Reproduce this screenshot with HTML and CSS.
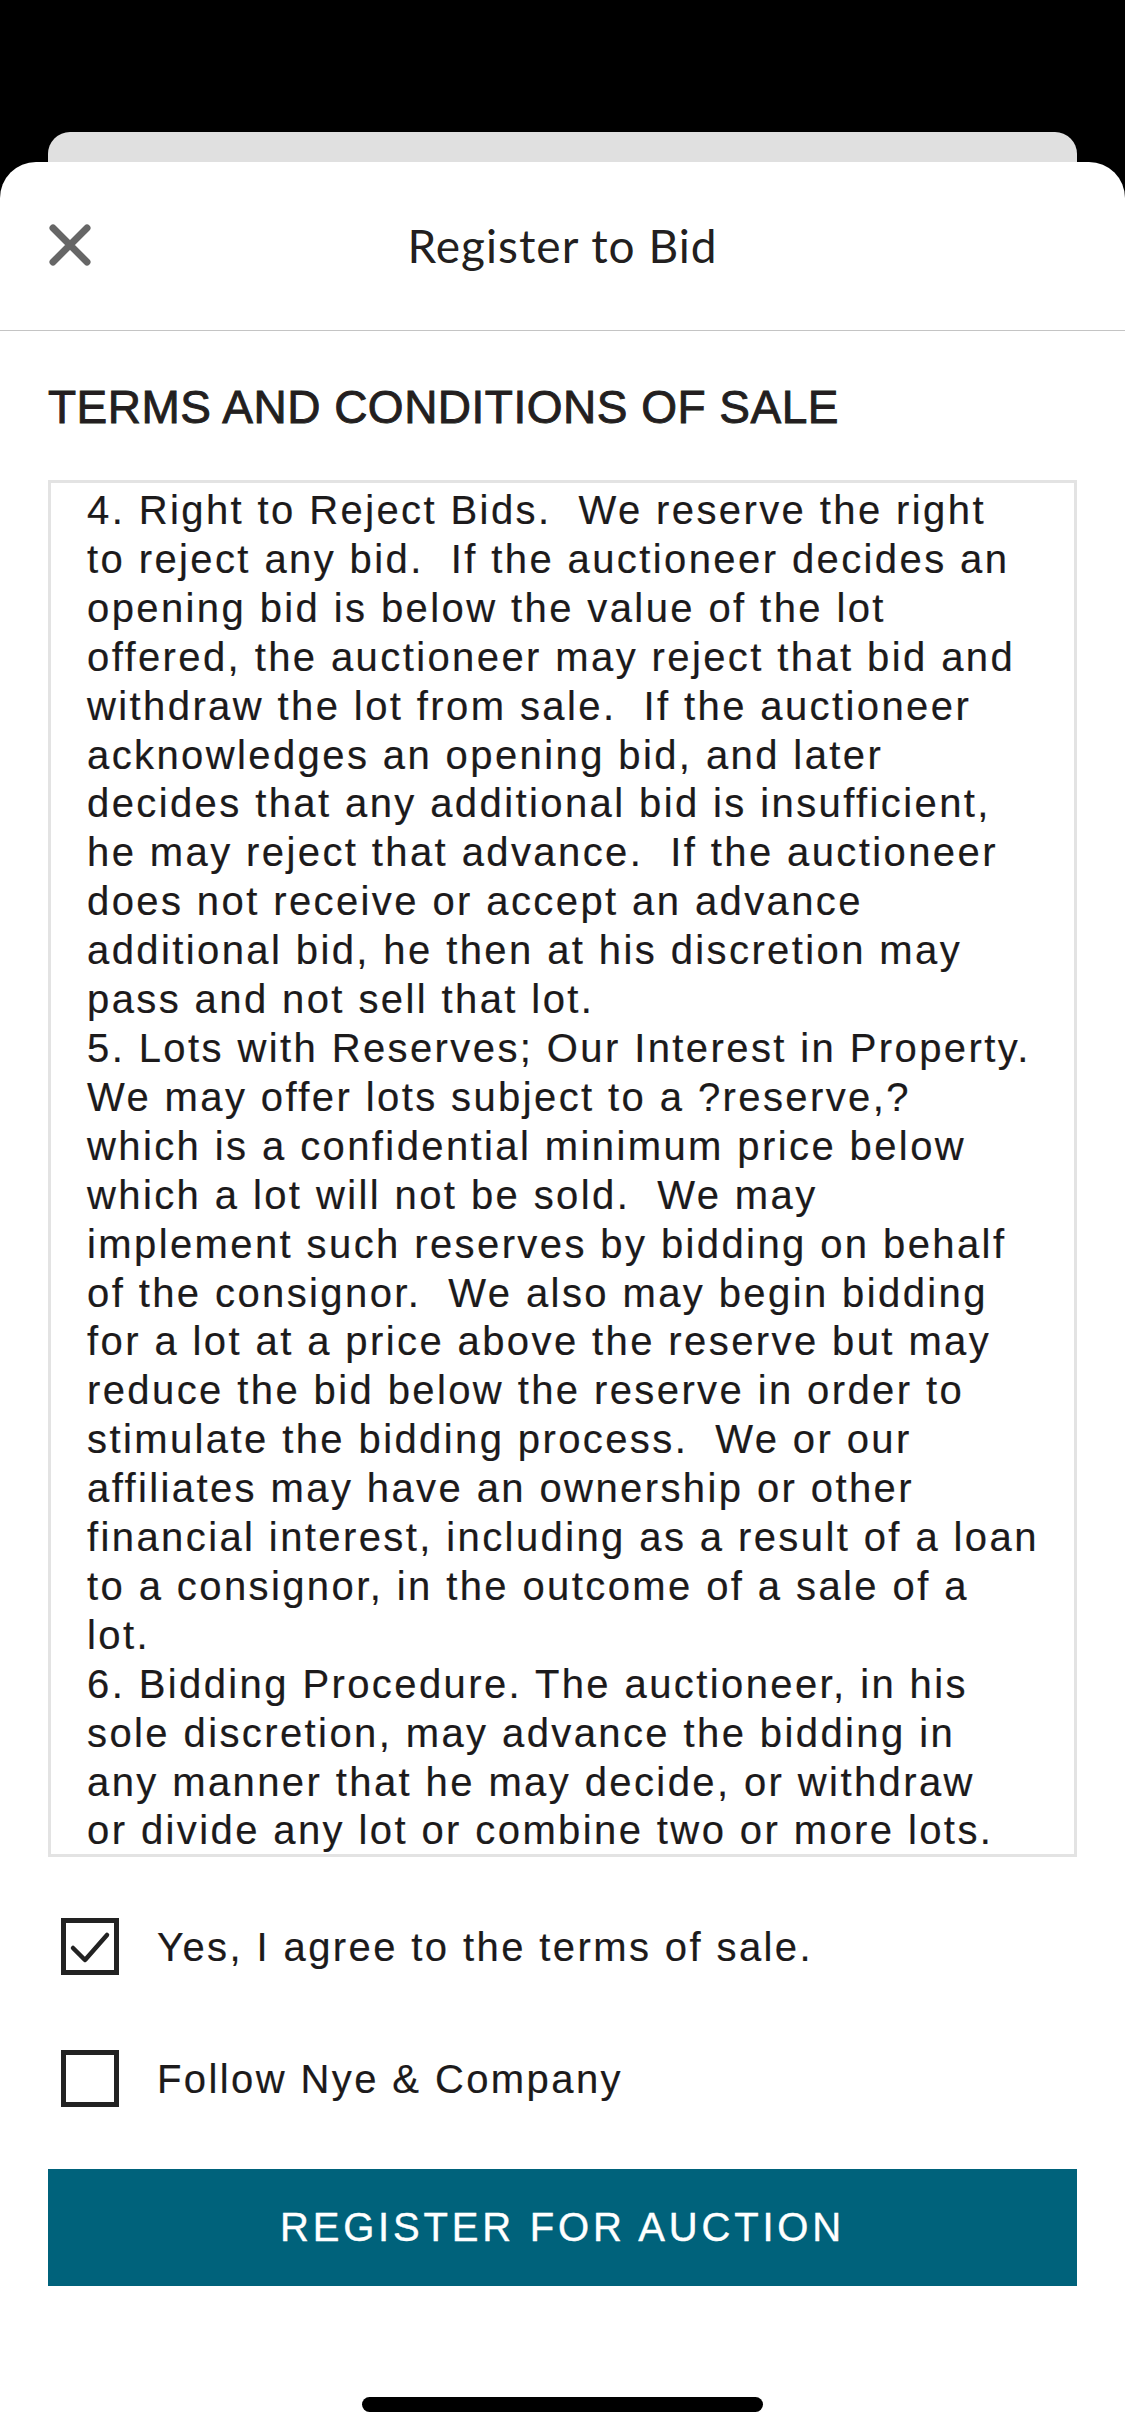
FILE: index.html
```html
<!DOCTYPE html>
<html lang="en">
<head>
<meta charset="utf-8">
<title>Register to Bid</title>
<link rel="stylesheet" href="styles.css">
</head>
<body>
<div class="back-card"></div>
<div class="sheet">
  <header class="header">
    <button class="close" aria-label="Close">
      <svg width="44" height="44" viewBox="0 0 44 44"><path d="M5 5 L39 39 M39 5 L5 39" stroke="#666" stroke-width="7" stroke-linecap="round" fill="none"/></svg>
    </button>
    <h1 class="title">Register to Bid</h1>
    <span></span>
  </header>
  <main class="content">
    <h2 class="heading">TERMS AND CONDITIONS OF SALE</h2>
    <div class="terms"><p class="terms-text">4. Right to Reject Bids.  We reserve the right
to reject any bid.  If the auctioneer decides an
opening bid is below the value of the lot
offered, the auctioneer may reject that bid and
withdraw the lot from sale.  If the auctioneer
acknowledges an opening bid, and later
decides that any additional bid is insufficient,
he may reject that advance.  If the auctioneer
does not receive or accept an advance
additional bid, he then at his discretion may
pass and not sell that lot.
5. Lots with Reserves; Our Interest in Property.
We may offer lots subject to a ?reserve,?
which is a confidential minimum price below
which a lot will not be sold.  We may
implement such reserves by bidding on behalf
of the consignor.  We also may begin bidding
for a lot at a price above the reserve but may
reduce the bid below the reserve in order to
stimulate the bidding process.  We or our
affiliates may have an ownership or other
financial interest, including as a result of a loan
to a consignor, in the outcome of a sale of a
lot.
6. Bidding Procedure. The auctioneer, in his
sole discretion, may advance the bidding in
any manner that he may decide, or withdraw
or divide any lot or combine two or more lots.</p></div>
    <label class="check-row first">
      <svg class="box" width="58" height="57" viewBox="0 0 58 57"><rect x="2.5" y="2.5" width="53" height="52" fill="#fff" stroke="#222" stroke-width="5"/><path d="M12 30 L24 42 L46 17" stroke="#222" stroke-width="4.5" stroke-linecap="round" stroke-linejoin="round" fill="none"/></svg>
      <span class="check-label">Yes, I agree to the terms of sale.</span>
    </label>
    <label class="check-row second">
      <svg class="box" width="58" height="57" viewBox="0 0 58 57"><rect x="2.5" y="2.5" width="53" height="52" fill="#fff" stroke="#222" stroke-width="5"/></svg>
      <span class="check-label">Follow Nye &amp; Company</span>
    </label>
    <button class="register">REGISTER FOR AUCTION</button>
  </main>
  <div class="home-indicator"></div>
</div>
</body>
</html>
```

FILE: styles.css
```css
html, body {
  margin: 0;
  padding: 0;
}
body {
  background: #000;
  width: 1125px;
  height: 2436px;
  overflow: hidden;
  font-family: "Liberation Sans", Arial, sans-serif;
  color: #1c1a1b;
}
.back-card {
  margin: 132px 48px 0;
  height: 30px;
  background: #e0e0e0;
  border-radius: 22px 22px 0 0;
}
.sheet {
  background: #fff;
  border-radius: 36px 36px 0 0;
  height: 2274px;
  display: flex;
  flex-direction: column;
}
.header {
  height: 168px;
  border-bottom: 1px solid #c4c4c4;
  display: grid;
  grid-template-columns: 1fr auto 1fr;
  align-items: center;
  padding: 0 48px;
}
.close {
  justify-self: start;
  background: none;
  border: 0;
  padding: 0;
  width: 44px;
  height: 44px;
  display: block;
  margin-top: -2px;
}
.close svg { display: block; }
.title {
  margin: 0;
  font-family: "Lato", "Open Sans", sans-serif;
  font-weight: 400;
  font-size: 46px;
  letter-spacing: 1px;
  color: #231f20;
  line-height: 1;
}
.content {
  padding: 0 48px;
  display: flex;
  flex-direction: column;
}
.heading {
  margin: 51px 0 0;
  font-size: 46px;
  line-height: 50px;
  font-weight: 400;
  letter-spacing: 0.5px;
  -webkit-text-stroke: 0.9px #231f20;
  color: #231f20;
}
.terms {
  margin-top: 48px;
  height: 1377px;
  box-sizing: border-box;
  border: 3px solid #e3e3e3;
  padding: 3px 0 0 36px;
  overflow: hidden;
}
.terms-text {
  margin: 0;
  white-space: pre;
  font-size: 40px;
  line-height: 48.9px;
  letter-spacing: 2.4px;
  -webkit-text-stroke: 0.2px #1c1a1b;
}
.check-row {
  display: flex;
  align-items: center;
  height: 57px;
  padding-left: 13px;
  gap: 38px;
}
.check-row.first { margin-top: 61px; }
.check-row.second { margin-top: 75px; }
.box { display: block; flex: none; }
.check-label {
  font-size: 40px;
  line-height: 57px;
  letter-spacing: 2.4px;
  padding-top: 2px;
  -webkit-text-stroke: 0.2px #1c1a1b;
}
.register {
  margin-top: 62px;
  height: 117px;
  border: 0;
  background: #00627b;
  color: #fff;
  font-family: "Liberation Sans", Arial, sans-serif;
  font-size: 40px;
  letter-spacing: 3.8px;
  -webkit-text-stroke: 0.4px #fff;
}
.home-indicator {
  margin: auto auto 24px;
  width: 401px;
  height: 15px;
  border-radius: 8px;
  background: #000;
}
```
